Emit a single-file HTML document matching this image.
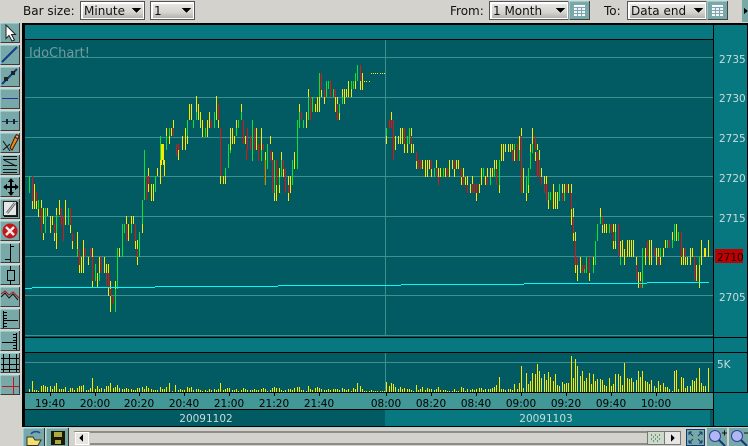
<!DOCTYPE html>
<html><head><meta charset="utf-8"><style>
html,body{margin:0;padding:0;background:#d4d2cd;width:748px;height:446px;overflow:hidden}
svg{display:block;position:absolute;left:0;top:0}
text{font-family:"DejaVu Sans","Liberation Sans",sans-serif}
</style></head><body>
<svg width="748" height="446" viewBox="0 0 748 446" xmlns="http://www.w3.org/2000/svg" shape-rendering="crispEdges">
<defs>
<linearGradient id="cb" x1="0" y1="0" x2="0" y2="1"><stop offset="0" stop-color="#e8e6e2"/><stop offset=".6" stop-color="#d6d4cf"/><stop offset="1" stop-color="#b4b2ad"/></linearGradient>
<g id="cal"><rect x="0" y="0" width="21" height="19" fill="#78a8a8"/><path d="M0 18.500H20.500V0" fill="none" stroke="#444"/><path d="M0 19V0H20" fill="none" stroke="#c8e4e4"/><rect x="5.500" y="4.500" width="10" height="10" fill="#eef" stroke="#fff"/><path d="M5 6.500H16M5 9.500H16M5 12.500H16M8.500 6V15M12.500 6V15" stroke="#78a8a8" fill="none"/></g>
<g id="btn"><rect x="0" y="0" width="20" height="20" fill="#78a8a8"/><path d="M0 20V0H19" fill="none" stroke="#b4e4e4"/><path d="M.5 19.500H19.500V0" fill="none" stroke="#3c3c3c"/></g>
</defs>
<rect width="748" height="446" fill="#d4d2cd"/>

<!-- top toolbar -->
<text x="23" y="15" font-size="12" fill="#111" shape-rendering="auto">Bar size:</text>
<rect x="80.500" y="1.500" width="64" height="18" fill="#fff" stroke="#555"/><rect x="83" y="4" width="60" height="14" fill="url(#cb)"/>
<text x="84" y="15" font-size="12" fill="#111">Minute</text><path d="M132 8h9l-4.500 5z" fill="#000"/>
<rect x="150.500" y="1.500" width="44" height="18" fill="#fff" stroke="#555"/><rect x="153" y="4" width="40" height="14" fill="url(#cb)"/>
<text x="154" y="15" font-size="12" fill="#111">1</text><path d="M182 8h9l-4.500 5z" fill="#000"/>
<text x="450" y="15" font-size="12" fill="#111">From:</text>
<rect x="489.500" y="1.500" width="79" height="18" fill="#fff" stroke="#555"/><rect x="492" y="4" width="75" height="14" fill="url(#cb)"/>
<text x="493" y="15" font-size="12" fill="#111">1 Month</text><path d="M556 8h9l-4.500 5z" fill="#000"/>
<use href="#cal" x="569" y="1"/>
<text x="604" y="15" font-size="12" fill="#111">To:</text>
<rect x="627.500" y="1.500" width="79" height="18" fill="#fff" stroke="#555"/><rect x="630" y="4" width="75" height="14" fill="url(#cb)"/>
<text x="631" y="15" font-size="12" fill="#111">Data end</text><path d="M694 8h9l-4.500 5z" fill="#000"/>
<use href="#cal" x="707" y="1"/>
<rect x="742" y="0" width="6" height="22" fill="#78a8a8"/><path d="M744 8l4 3-4 3z" fill="#000"/>

<!-- chart frame -->
<rect x="22" y="23" width="726" height="404" fill="#000"/>
<rect x="25" y="25" width="688" height="14" fill="#087880"/>
<rect x="25" y="40" width="688" height="297" fill="#025a62"/>
<rect x="25" y="338" width="688" height="14" fill="#087880"/>
<rect x="25" y="353" width="688" height="39" fill="#025a62"/>
<rect x="25" y="393" width="688" height="16" fill="#429797"/>
<rect x="25" y="410" width="360" height="16" fill="#025a62"/>
<rect x="385" y="410" width="325" height="16" fill="#087880"/>
<rect x="710" y="410" width="3" height="16" fill="#025a62"/>
<rect x="714" y="25" width="33" height="312" fill="#087880"/>
<rect x="714" y="338" width="33" height="14" fill="#087880"/>
<rect x="714" y="353" width="33" height="39" fill="#087880"/>
<rect x="714" y="393" width="34" height="33" fill="#087880"/>

<!-- grid -->
<path d="M25 57.500H713M25 97.500H713M25 137.500H713M25 176.500H713M25 216.500H713M25 256.500H713M25 295.500H713M25 335.500H713M25 362.500H713" stroke="#3f9191" fill="none"/>
<path d="M385.500 40V336M385.500 353V392" stroke="#3f9191" fill="none"/>
<text x="29" y="57" font-size="13" fill="#6f9c9c" shape-rendering="auto">IdoChart!</text>

<!-- price bars -->
<g transform="translate(.5,0)" fill="none" stroke-width="1">
<path stroke="#ffe800" d="M32 201V209M34 184V209M36 201V209M38 209V217M41 200V208M43 208V224M43 233V240M47 208V216M50 216V233M52 216V225M54 233V241M56 208V215M56 233V249M59 200V215M65 200V225M70 225V233M72 241V249M77 232V249M79 265V273M81 257V273M83 240V273M88 257V265M92 248V257M92 281V287M97 273V287M99 257V273M104 257V273M106 264V273M108 264V273M108 287V296M110 281V289M110 296V312M115 281V289M119 248V257M126 216V224M128 224V241M131 216V224M133 216V224M135 241V249M137 240V249M137 257V265M142 208V216M142 224V233M144 192V200M148 168V176M148 184V192M151 184V201M153 184V201M157 168V176M160 160V176M160 176V184M162 144V160M164 160V176M161 144V165M163 144V165M166 128V136M169 136V144M171 128V136M173 120V128M182 136V150M185 128V150M187 136V144M189 104V120M191 104V120M196 96V112M198 104V120M200 112V128M202 120V137M207 120V137M209 112V128M216 96V120M218 120V128M230 128V150M232 128V144M234 136V144M236 120V128M241 104V112M245 136V144M220 176V184M223 176V184M225 176V184M176 150V156M178 150V160M252 150V161M256 128V150M261 128V150M265 152V160M270 136V144M272 152V160M276 185V201M274 193V201M279 168V177M279 185V193M281 152V160M283 169V177M288 176V185M288 193V201M290 176V193M294 152V169M299 104V128M306 112V128M308 89V97M315 104V112M317 97V112M319 97V112M321 90V97M324 97V104M335 97V112M337 97V104M339 113V120M342 89V104M344 89V104M346 89V97M348 81V97M351 89V97M355 81V89M360 81V90M362 73V90M364 81V82M366 81V82M369 81V82M371 73V74M373 73V74M375 73V74M377 73V74M380 73V74M382 73V74M384 73V74M386 136V144M391 112V120M395 136V150M398 136V144M400 128V144M402 128V144M404 144V153M407 144V153M411 128V136M411 144V153M413 144V153M416 161V169M422 160V169M425 160V177M427 160V177M429 160V169M431 169V177M436 160V168M438 168V177M440 168V177M445 168V177M449 160V177M452 160V169M454 169V177M456 160V169M458 160V169M461 177V185M463 168V177M465 177V185M467 176V185M470 184V193M472 176V184M476 193V201M479 184V193M481 168V185M485 176V185M487 168V177M490 168V177M492 168V177M494 160V169M496 160V169M499 185V193M501 144V161M503 144V161M505 144V152M508 144V152M510 144V152M512 144V150M514 150V161M519 136V150M521 128V136M530 144V153M532 128V144M537 144V150M523 168V193M526 193V201M528 185V193M535 152V161M539 150V160M541 168V177M544 176V184M546 176V184M548 200V209M553 184V209M555 192V209M557 192V209M562 184V193M564 184V193M568 184V193M571 184V193M571 209V225M573 208V217M573 233V241M575 232V241M575 265V273M577 265V281M580 257V273M589 273V281M593 257V265M600 208V217M602 225V233M604 224V233M606 224V233M613 224V232M613 241V249M615 224V232M615 241V249M620 241V257M622 240V257M624 249V265M627 240V257M629 240V257M631 240V257M633 240V257M636 257V265M638 272V288M640 272V281M645 248V265M649 240V265M651 240V265M656 248V265M658 248V257M660 257V265M663 248V257M665 240V248M672 232V248M676 224V241M681 257V265M683 248V265M685 257V265M687 257V265M690 248V265M692 248V257M696 265V281M699 265V288M701 240V265M704 248V257M705 248V257M708 240V257"/>
<path stroke="#10e030" d="M29 176V193M38 200V209M45 208V233M56 215V233M68 208V225M77 249V257M95 264V281M99 273V281M115 289V312M117 248V289M122 224V257M124 224V233M131 224V233M139 232V257M142 200V224M144 150V200M155 176V192M160 136V160M166 136V150M169 128V136M187 120V136M193 120V128M196 112V120M205 128V137M214 112V128M225 168V176M228 144V168M230 150V153M236 128V136M238 120V128M241 112V120M252 120V161M265 160V185M267 144V169M261 150V161M274 160V193M279 177V185M281 160V177M292 160V185M297 120V169M299 112V128M303 120V128M308 97V120M312 97V112M319 73V97M326 81V97M328 81V89M333 89V97M339 104V113M342 97V104M351 81V89M353 81V89M355 73V81M357 65V81M386 128V136M407 136V144M409 128V144M434 168V177M443 168V177M483 168V177M490 177V185M494 169V177M499 160V185M514 144V150M519 150V161M526 176V193M528 168V185M530 152V169M532 144V153M548 192V200M550 192V200M559 184V201M564 193V201M584 265V273M586 257V273M593 265V273M595 241V265M597 224V241M600 217V224M609 224V233M615 232V241M620 257V265M642 248V288M660 248V257M667 240V248M672 240V248M674 224V241M678 232V241M699 257V265"/>
<path stroke="#e81010" d="M32 176V201M36 192V201M41 208V233M54 224V233M61 208V225M63 216V241M70 208V225M72 233V241M79 249V265M85 248V257M90 248V257M92 257V281M101 257V273M106 273V287M108 273V287M110 289V296M113 296V304M126 224V241M135 224V241M137 249V257M146 176V200M148 176V184M173 128V136M176 144V156M178 144V150M211 120V128M218 104V120M220 128V176M243 120V144M247 128V150M246 150V160M250 136V150M254 128V150M258 144V161M263 144V150M264 160V185M270 150V161M272 160V193M276 160V185M283 160V169M285 168V193M288 185V193M301 112V120M310 97V120M321 73V90M324 89V97M330 81V97M335 89V97M337 104V120M360 65V81M389 120V128M391 120V128M393 120V160M404 128V144M411 136V144M416 152V161M418 160V169M420 160V169M431 160V169M436 168V177M438 177V185M447 168V177M454 160V169M461 168V177M463 177V185M467 185V193M472 184V193M474 184V193M476 184V193M487 177V185M496 169V185M512 150V161M517 144V161M521 136V193M535 136V150M537 152V177M539 160V177M541 177V185M544 184V193M546 184V201M562 193V201M566 184V193M571 193V209M573 217V233M575 241V265M577 257V265M582 265V273M589 257V273M584 265V269M602 217V225M611 224V233M613 232V241M618 224V257M636 265V281M640 281V288M647 241V257M654 248V257M658 257V265M669 240V248M681 232V257M685 248V257M694 257V281"/>
</g>
<!-- MA line -->
<path d="M25 288.500H32M32 287.500H155M155 286.500H278M278 285.500H401M401 284.500H524M524 283.500H647M647 282.500H709" stroke="#00fafa" fill="none"/>

<!-- volume -->
<path transform="translate(.5,0)" stroke="#ffe800" fill="none" d="M29 392v-3M32 392v-11M34 392v-2M36 392v-2M38 392v-1M41 392v-6M43 392v-7M45 392v-6M47 392v-5M50 392v-6M52 392v-3M54 392v-6M56 392v-9M59 392v-3M61 392v-3M63 392v-3M65 392v-5M68 392v-1M70 392v-4M72 392v-4M74 392v-2M77 392v-4M79 392v-6M81 392v-6M83 392v-7M86 392v-2M88 392v-2M90 392v-4M92 392v-14M95 392v-3M97 392v-6M99 392v-3M101 392v-4M104 392v-3M106 392v-6M108 392v-6M110 392v-9M113 392v-4M115 392v-5M117 392v-7M119 392v-4M122 392v-3M124 392v-3M126 392v-4M128 392v-3M131 392v-3M133 392v-2M135 392v-2M137 392v-4M139 392v-4M142 392v-5M144 392v-3M146 392v-6M148 392v-4M151 392v-3M153 392v-2M155 392v-2M157 392v-2M160 392v-5M162 392v-3M164 392v-3M166 392v-5M169 392v-9M172 392v-1M175 392v-7M178 392v-2M180 392v-3M182 392v-2M184 392v-2M187 392v-5M189 392v-4M191 392v-5M193 392v-2M196 392v-3M198 392v-3M200 392v-2M202 392v-1M205 392v-2M207 392v-1M209 392v-3M211 392v-2M214 392v-3M216 392v-2M218 392v-3M220 392v-9M223 392v-2M225 392v-3M227 392v-4M229 392v-4M232 392v-2M234 392v-2M236 392v-3M238 392v-1M241 392v-2M243 392v-4M245 392v-3M247 392v-2M250 392v-2M252 392v-2M254 392v-3M256 392v-2M258 392v-2M261 392v-3M263 392v-4M265 392v-3M267 392v-1M270 392v-2M272 392v-4M274 392v-5M276 392v-4M279 392v-4M281 392v-2M283 392v-1M285 392v-2M288 392v-3M290 392v-3M292 392v-2M294 392v-4M297 392v-5M299 392v-5M301 392v-2M303 392v-2M306 392v-1M308 392v-6M310 392v-3M312 392v-2M315 392v-4M317 392v-5M319 392v-4M321 392v-3M324 392v-2M326 392v-2M328 392v-3M330 392v-2M333 392v-3M335 392v-3M337 392v-3M339 392v-2M342 392v-4M344 392v-3M346 392v-2M348 392v-3M351 392v-1M353 392v-4M355 392v-3M357 392v-9M360 392v-6M362 392v-3M364 392v-1M366 392v-1M369 392v-1M371 392v-2M373 392v-1M375 392v-1M377 392v-1M380 392v-1M382 392v-1M384 392v-1M386 392v-10M389 392v-6M391 392v-9M393 392v-8M395 392v-5M398 392v-3M400 392v-5M402 392v-3M404 392v-4M407 392v-3M409 392v-3M411 392v-2M413 392v-1M416 392v-7M418 392v-2M420 392v-3M422 392v-5M425 392v-2M427 392v-4M429 392v-3M431 392v-3M434 392v-2M436 392v-3M438 392v-5M440 392v-2M443 392v-2M445 392v-2M447 392v-1M449 392v-1M452 392v-1M454 392v-3M456 392v-1M458 392v-1M461 392v-5M463 392v-4M465 392v-1M467 392v-3M470 392v-2M472 392v-3M474 392v-2M476 392v-3M479 392v-4M481 392v-4M483 392v-2M485 392v-3M488 392v-3M490 392v-3M492 392v-4M494 392v-5M496 392v-7M499 392v-15M501 392v-3M503 392v-3M505 392v-2M508 392v-3M510 392v-3M512 392v-2M514 392v-8M517 392v-3M519 392v-9M521 392v-26M523 392v-4M526 392v-19M528 392v-8M530 392v-11M532 392v-19M535 392v-18M537 392v-28M539 392v-21M541 392v-14M544 392v-18M546 392v-12M548 392v-20M550 392v-15M553 392v-11M555 392v-18M557 392v-7M559 392v-6M562 392v-10M564 392v-8M566 392v-9M568 392v-9M571 392v-36M573 392v-14M575 392v-33M577 392v-26M580 392v-16M582 392v-21M584 392v-11M586 392v-14M589 392v-19M591 392v-8M593 392v-18M595 392v-11M597 392v-13M600 392v-13M602 392v-12M604 392v-7M606 392v-6M609 392v-14M611 392v-6M613 392v-8M615 392v-18M618 392v-18M620 392v-16M622 392v-7M624 392v-29M627 392v-14M629 392v-13M631 392v-14M633 392v-10M636 392v-12M638 392v-21M640 392v-15M642 392v-21M645 392v-11M647 392v-10M649 392v-8M651 392v-12M654 392v-6M656 392v-4M658 392v-11M660 392v-7M663 392v-9M665 392v-5M667 392v-5M669 392v-3M672 392v-1M674 392v-21M676 392v-22M678 392v-3M681 392v-15M683 392v-14M685 392v-4M687 392v-6M690 392v-6M692 392v-12M694 392v-11M696 392v-14M699 392v-24M701 392v-9M703 392v-6M705 392v-6M708 392v-24"/>

<!-- time axis -->
<path d="M50.500 393V396M95.500 393V396M139.500 393V396M184.500 393V396M229.500 393V396M274.500 393V396M319.500 393V396M386.500 393V396M431.500 393V396M476.500 393V396M521.500 393V396M566.500 393V396M611.500 393V396M656.500 393V396" stroke="#000" fill="none"/>
<g font-size="10.500" fill="#000" text-anchor="middle" shape-rendering="auto">
<text x="50" y="407">19:40</text><text x="95" y="407">20:00</text><text x="139" y="407">20:20</text><text x="184" y="407">20:40</text><text x="229" y="407">21:00</text><text x="274" y="407">21:20</text><text x="319" y="407">21:40</text><text x="386" y="407">08:00</text><text x="431" y="407">08:20</text><text x="476" y="407">08:40</text><text x="521" y="407">09:00</text><text x="566" y="407">09:20</text><text x="611" y="407">09:40</text><text x="656" y="407">10:00</text>
</g>
<g font-size="10.500" fill="#c8dcdc" text-anchor="middle"><text x="206" y="422">20091102</text><text x="546" y="422">20091103</text></g>

<!-- price axis -->
<rect x="715" y="249" width="28" height="14" fill="#c00000"/>
<g font-size="10.500" fill="#c8dcdc">
<text x="719" y="63">2735</text><text x="719" y="102">2730</text><text x="719" y="142">2725</text><text x="719" y="182">2720</text><text x="719" y="222">2715</text><text x="717" y="261" fill="#000">2710</text><text x="719" y="301">2705</text><text x="717" y="368">5K</text>
</g>

<!-- left tools -->
<g stroke-linecap="butt">
<use href="#btn" x="0" y="23"/><path d="M6 25V38.500L9 35.500 12 41 14.500 40 11.500 34.500H15.500Z" fill="#fff" stroke="#222" shape-rendering="auto"/>
<use href="#btn" x="0" y="45"/><path d="M2 62L17 47" stroke="#123c8c" stroke-width="2" fill="none" shape-rendering="auto"/>
<use href="#btn" x="0" y="67"/><path d="M2 84L17 69" stroke="#123c8c" stroke-width="2" fill="none" shape-rendering="auto"/><rect x="4" y="77" width="4" height="4" fill="#222"/><rect x="11" y="71" width="4" height="4" fill="#222"/>
<use href="#btn" x="0" y="89"/><path d="M2 98.500H18" stroke="#123c8c" fill="none"/><path d="M2 99.500H18" stroke="#889cc0" fill="none"/>
<use href="#btn" x="0" y="111"/><path d="M2 121.500H18" stroke="#123c8c" fill="none"/><rect x="6" y="119" width="2" height="5" fill="#222"/><rect x="13" y="119" width="2" height="5" fill="#222"/>
<use href="#btn" x="0" y="133"/><path d="M3 141L10 151M3 150L10 144" stroke="#111" fill="none" shape-rendering="auto"/><path d="M10 148L15 137 18 139 12 150Z" fill="#f08a18" stroke="#3a1c00" shape-rendering="auto"/><path d="M15 137l1.500-2.500 2.500 1.500-1 3z" fill="#f0a0a0" stroke="#3a1c00" shape-rendering="auto"/>
<use href="#btn" x="0" y="155"/><path d="M3 156.500H17M3 159.500H17M3 165.500H17M3 169.500H17M3 172.500H17" stroke="#111" fill="none"/><path d="M4 160L16 166" stroke="#111" fill="none" shape-rendering="auto"/>
<use href="#btn" x="0" y="177"/><path d="M11 180V194M4 187H18" stroke="#000" stroke-width="2" fill="none"/><path d="M11 178l-3 4h6zM11 196l-3-4h6zM3 187l4-3v6zM19 187l-4-3v6z" fill="#000"/>
<use href="#btn" x="0" y="199"/><rect x="4" y="202" width="14" height="15" fill="#111"/><rect x="3.500" y="201.500" width="13" height="14" fill="#e4e6e6" stroke="#222"/><path d="M7 213L15 203" stroke="#555" stroke-width="2.500" fill="none" shape-rendering="auto"/><path d="M7 213L15 203" stroke="#ddd" stroke-width=".8" fill="none" shape-rendering="auto"/>
<use href="#btn" x="0" y="221"/><circle cx="10" cy="231" r="7.500" fill="#c01818" shape-rendering="auto"/><path d="M6 227L14 235M14 227L6 235" stroke="#f0e8e8" stroke-width="2.500" fill="none" shape-rendering="auto"/>
<use href="#btn" x="0" y="243"/><path d="M10.500 244V262M10.500 246.500H14M5 259.500H10.500" stroke="#000" fill="none"/>
<use href="#btn" x="0" y="265"/><rect x="7.500" y="270.500" width="7" height="10" fill="none" stroke="#000"/><path d="M10.500 266V270M10.500 281V285" stroke="#000" fill="none"/>
<use href="#btn" x="0" y="287"/><path d="M1 294L5 291 9 295 13 292 19 298" stroke="#b01818" fill="none" shape-rendering="auto"/><path d="M1 297L5 293 9 298 13 294 18 300" stroke="#111" fill="none" shape-rendering="auto"/>
<use href="#btn" x="0" y="309"/><path d="M3.500 311V328M3.500 320.500H18M3.500 312.500H7M3.500 315.500H7M3.500 318.500H7M3.500 323.500H7M3.500 326.500H7" stroke="#000" fill="none"/>
<use href="#btn" x="0" y="331"/><path d="M16.500 333V350M2 342.500H17M13 334.500H16.500M13 337.500H16.500M13 340.500H16.500M13 345.500H16.500M13 348.500H16.500" stroke="#000" fill="none"/>
<use href="#btn" x="0" y="353"/><path d="M1 358.500H19M1 364.500H19M1 369.500H19M3.500 354V372M9.500 354V372M16.500 354V372" stroke="#000" fill="none"/>
<use href="#btn" x="0" y="375"/><path d="M13.500 377V394M2 386.500H19" stroke="#c01818" fill="none"/>
</g>

<!-- bottom bar -->
<rect x="0" y="427" width="748" height="19" fill="#d4d2cd"/>
<rect x="23" y="427" width="725" height="1" fill="#a8d8d8"/>
<rect x="23" y="428" width="21" height="18" fill="#78a8a8"/><path d="M23 446V428H44" stroke="#b4e4e4" fill="none"/><path d="M44.500 428V446" stroke="#333" fill="none"/>
<path d="M27 437h6l2 3h6l-3 5.500H27z" fill="#f4e070" stroke="#333" shape-rendering="auto"/><path d="M31 434c2-3 7-3 9-1" stroke="#1848a0" fill="none" stroke-width="1.500" shape-rendering="auto"/>
<rect x="46" y="428" width="22" height="18" fill="#78a8a8"/><path d="M46 446V428H67" stroke="#b4e4e4" fill="none"/><path d="M68.500 428V446" stroke="#333" fill="none"/>
<rect x="51" y="431" width="14" height="14" fill="#1a1a00"/><rect x="54" y="432" width="8" height="5" fill="#b0a840"/><rect x="55" y="440" width="6" height="4" fill="#b0a840"/>
<rect x="74" y="430" width="608" height="16" fill="#d4d2cd"/>
<rect x="90" y="431" width="557" height="2" fill="#8e8c88"/><rect x="90" y="443" width="557" height="2" fill="#8e8c88"/>
<rect x="74" y="431" width="16" height="1" fill="#8e8c88"/>
<rect x="75.500" y="432.500" width="13" height="12" fill="#e8e6e2" stroke="#fff"/><path d="M83 434.500v7l-4-3.500z" fill="#000"/>
<rect x="647.500" y="431.500" width="17" height="13" fill="#c8dcc8" stroke="#777"/>
<path d="M651 435h1M655 435h1M659 435h1M653 437h1M657 437h1M651 439h1M655 439h1M659 439h1M653 441h1M657 441h1" stroke="#335" fill="none"/>
<rect x="664.500" y="431.500" width="16" height="13" fill="#e8e6e2" stroke="#777"/><path d="M671 434.500v7l4-3.500z" fill="#000"/>
<rect x="686.500" y="429.500" width="18" height="16" fill="#78a8a8" stroke="#123c70"/>
<path d="M689 432l4 4M702 432l-4 4M689 443l4-4M702 443l-4-4M689 432h3M689 432v3M702 432h-3M702 432v3M689 443h3M689 443v-3M702 443h-3M702 443v-3" stroke="#123c70" fill="none" shape-rendering="auto"/>
<rect x="707" y="428" width="20" height="18" fill="#78a8a8"/>
<circle cx="715" cy="436" r="5.500" fill="#b0b8f4" stroke="#3040a0" shape-rendering="auto"/><path d="M719 440L725 446" stroke="#123c70" stroke-width="2" shape-rendering="auto"/><path d="M722 433h5M724.500 430.500v5" stroke="#111" fill="none"/>
<rect x="729" y="428" width="19" height="18" fill="#78a8a8"/>
<circle cx="737" cy="436" r="5.500" fill="#b0b8f4" stroke="#3040a0" shape-rendering="auto"/><path d="M741 440L747 446" stroke="#123c70" stroke-width="2" shape-rendering="auto"/><path d="M744 433h4" stroke="#111" fill="none"/>
</svg>
</body></html>
